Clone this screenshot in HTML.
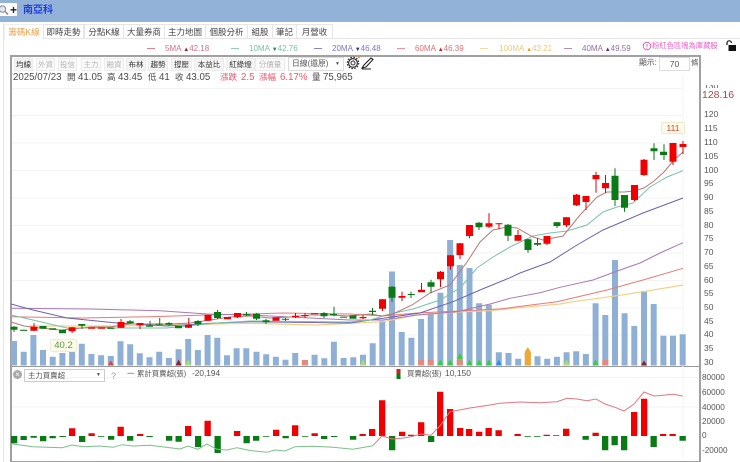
<!DOCTYPE html>
<html><head><meta charset="utf-8"><style>
html,body{margin:0;padding:0;background:#fff}
#p{position:relative;width:740px;height:462px;overflow:hidden;background:#fff;font-family:"Liberation Sans","Noto Sans CJK TC",sans-serif;color:#444;filter:blur(.3px)}
#p div,#p span{position:absolute;white-space:nowrap}
.tab{top:24px;height:14px;line-height:14px;font-size:8.5px;text-align:center;border:1px solid #e6e6e6;border-bottom:none;color:#444;box-sizing:content-box}
.btn{top:58px;height:11px;line-height:11px;font-size:7.5px;text-align:center;background:#f4f4f4;border:1px solid #ececec;color:#333}
.g{color:#b5b5b5;background:#fafafa}
.l{top:43px;font-size:8px;line-height:11px}
.l b{font-weight:normal;font-size:6px}
.d{top:48px;width:8px;height:1px}
.t{top:71px;font-size:9.7px;line-height:13px;color:#4a4a4a}
.c{font-size:8.5px}
.r{color:#f0546a}
.y{left:704px;font-size:8.5px;line-height:11px;color:#555}
.z{left:702px;font-size:8.2px;line-height:11px;color:#555}
</style></head><body><div id="p">
<div style="left:0;top:0;width:740px;height:22px;background:#93b2d8"></div>
<div style="left:0;top:3px;width:17px;height:13px;background:#fff"></div>
<svg style="position:absolute;left:0;top:4px" width="10" height="12"><circle cx="2.5" cy="5" r="3.2" fill="#dfe8f0" stroke="#8a96a0" stroke-width="1.2"/><path d="M5 7.5l3 3" stroke="#a09070" stroke-width="1.6"/></svg>
<div style="left:10px;top:3px;font-size:12px;font-weight:bold;line-height:14px;color:#222">+</div>
<div style="left:23px;top:3px;font-size:10px;line-height:15px;font-weight:bold;color:#1f3fe0">南亞科</div>
<div style="left:3px;top:23px;width:1px;height:439px;background:#e4e4e4"></div>
<div style="left:43px;top:38px;width:697px;height:1px;background:#e6e6e6"></div>
<div class="tab" style="left:4px;width:38px;color:#f0a040;border-color:#eee">籌碼K線</div>
<div class="tab" style="left:43px;width:39px">即時走勢</div>
<div class="tab" style="left:84px;width:38px">分點K線</div>
<div class="tab" style="left:123px;width:40px">大量券商</div>
<div class="tab" style="left:164px;width:40px">主力地圖</div>
<div class="tab" style="left:205px;width:41px">個股分析</div>
<div class="tab" style="left:247px;width:24px">組股</div>
<div class="tab" style="left:272px;width:23px">筆記</div>
<div class="tab" style="left:296px;width:35px">月營收</div>

<div class="d" style="left:147px;background:#e08090"></div><div class="l" style="left:165px;color:#d0708a">5MA <b style="color:#a02020">▲</b>42.18</div>
<div class="d" style="left:231px;background:#90ccb8"></div><div class="l" style="left:249px;color:#7cc0a8">10MA <b style="color:#308060">▼</b>42.76</div>
<div class="d" style="left:314px;background:#8a86c8"></div><div class="l" style="left:332px;color:#7a76c0">20MA <b style="color:#303090">▼</b>46.48</div>
<div class="d" style="left:397px;background:#ee90a0"></div><div class="l" style="left:415px;color:#e07070">60MA <b style="color:#d02020">▲</b>46.39</div>
<div class="d" style="left:480px;background:#f5dc9a"></div><div class="l" style="left:499px;color:#f0c878">100MA <b style="color:#e0a020">▲</b>43.21</div>
<div class="d" style="left:564px;background:#b890b8"></div><div class="l" style="left:582px;color:#9070a0">40MA <b style="color:#702090">▲</b>49.59</div>
<svg style="position:absolute;left:642px;top:41px" width="10" height="10"><circle cx="5" cy="5" r="3.8" fill="none" stroke="#e060c0"/><path d="M5 3v2.6M5 6.6v1" stroke="#e060c0"/></svg>
<div style="left:652px;top:41px;font-size:7.3px;line-height:10px;color:#e860c8">粉紅色區塊為庫藏股</div>
<svg style="position:absolute;left:725px;top:40px" width="12" height="12"><path d="M2 5V3a2.2 2.2 0 0 1 4.4 0" fill="none" stroke="#111" stroke-width="1.2"/><rect x="3.5" y="5" width="7.5" height="6" fill="#111"/></svg>

<div style="left:10px;top:55px;width:687px;height:404px;border:2px solid #a0a0a0"></div>
<div style="left:12px;top:366px;width:687px;height:1px;background:#999"></div>

<div class="btn" style="left:14px;width:17px">均線</div>
<div class="btn g" style="left:36px;width:17px">外資</div>
<div class="btn g" style="left:58px;width:17px">投信</div>
<div class="btn g" style="left:81px;width:18px">主力</div>
<div class="btn g" style="left:104px;width:18px">融資</div>
<div class="btn" style="left:126px;width:18px">布林</div>
<div class="btn" style="left:148px;width:18px">趨勢</div>
<div class="btn" style="left:171px;width:19px">撐壓</div>
<div class="btn" style="left:194px;width:28px">本益比</div>
<div class="btn" style="left:226px;width:27px">紅綠燈</div>
<div class="btn g" style="left:255px;width:28px">分價量</div>
<div style="left:288px;top:57px;width:54px;height:12px;border:1px solid #ddd;font-size:7.8px;line-height:12px;color:#555;text-indent:3px;box-sizing:content-box">日線(還原)<span style="right:3px;top:0;font-size:5px">▼</span></div>
<svg style="position:absolute;left:345px;top:55px" width="30" height="15"><circle cx="8" cy="8" r="2" fill="none" stroke="#333"/><circle cx="8" cy="8" r="4.4" fill="none" stroke="#333" stroke-width="1.2"/><circle cx="8" cy="8" r="5.7" fill="none" stroke="#333" stroke-width="1.2" stroke-dasharray="1.6 1.4"/><circle cx="14" cy="2" r="1.2" fill="#f09030"/><path d="M17 13l2-3 7-7 2 1.5-7 7.5zM17 14h9" fill="none" stroke="#222" stroke-width="1.1"/></svg>

<div style="left:639px;top:57px;font-size:7.8px;line-height:12px;color:#555">顯示:</div>
<div style="left:659px;top:57px;width:29px;height:12px;border:1px solid #ddd;font-size:8.5px;line-height:12px;text-align:center;color:#555">70</div>
<div style="left:691px;top:57px;font-size:7.5px;line-height:12px;color:#555">條</div>

<div class="t" style="left:13px">2025/07/23</div><div class="t c" style="left:67px">開</div><div class="t" style="left:78px">41.05</div>
<div class="t c" style="left:107px">高</div><div class="t" style="left:118px">43.45</div>
<div class="t c" style="left:148px">低</div><div class="t" style="left:159px">41</div>
<div class="t c" style="left:175px">收</div><div class="t" style="left:186px">43.05</div>
<div class="t r c" style="left:220px">漲跌</div><div class="t r" style="left:241px">2.5</div>
<div class="t r c" style="left:259px">漲幅</div><div class="t r" style="left:280px">6.17%</div>
<div class="t c" style="left:312px">量</div><div class="t" style="left:323px">75,965</div>

<svg style="position:absolute;left:0;top:0" width="740" height="462">
<g stroke="#f3f3f3" fill="none"><path d="M12 88.5H682M12 115.5H682M12 143H682M12 170.5H682M12 198H682M12 225.5H682M12 253H682M12 280.5H682M12 308H682M12 335H682M12 377.5H698M12 407H698M683 75V459"/></g>
<path fill="#8fb0d4" d="M11 341h6V365.5h-6zM20.7 351.7h6V365.5h-6zM30.4 335h6V365.5h-6zM40 350h6V365.5h-6zM49.7 356.7h6V365.5h-6zM59.4 353h6V365.5h-6zM69.1 350h6V365.5h-6zM78.8 343.7h6V365.5h-6zM88.4 354h6V365.5h-6zM98.1 355.3h6V365.5h-6zM107.8 356h6V365.5h-6zM117.5 341.3h6V365.5h-6zM127.2 344.3h6V365.5h-6zM136.8 353.3h6V365.5h-6zM146.5 357.3h6V365.5h-6zM156.2 351.7h6V365.5h-6zM165.9 358h6V365.5h-6zM175.6 349.3h6V365.5h-6zM185.2 339h6V365.5h-6zM194.9 350h6V365.5h-6zM204.6 335h6V365.5h-6zM214.3 337.7h6V365.5h-6zM224 355.3h6V365.5h-6zM233.6 348.3h6V365.5h-6zM243.3 348.3h6V365.5h-6zM253.5 351.7h6V365.5h-6zM263.2 354.3h6V365.5h-6zM272.9 356.7h6V365.5h-6zM282.5 359.7h6V365.5h-6zM292.2 353h6V365.5h-6zM301.9 360h6V365.5h-6zM311.6 354.7h6V365.5h-6zM321.3 358.3h6V365.5h-6zM330.9 341.7h6V365.5h-6zM340.6 358h6V365.5h-6zM350.3 357.3h6V365.5h-6zM360 354.7h6V365.5h-6zM369.7 343.3h6V365.5h-6zM379.3 320.7h6V365.5h-6zM389 271.5h6V365.5h-6zM398.7 332h6V365.5h-6zM408.4 337.7h6V365.5h-6zM418.1 319h6V365.5h-6zM427.7 313.3h6V365.5h-6zM437.4 292.7h6V365.5h-6zM447.1 240h6V365.5h-6zM456.8 265h6V365.5h-6zM466.5 268h6V365.5h-6zM476.1 303.3h6V365.5h-6zM485.8 304.7h6V365.5h-6zM495.8 352.3h6V365.5h-6zM505.5 353h6V365.5h-6zM515.2 358.7h6V365.5h-6zM524.8 351.7h6V365.5h-6zM534.5 356.3h6V365.5h-6zM544.2 358.7h6V365.5h-6zM553.9 356.7h6V365.5h-6zM563.6 352.3h6V365.5h-6zM573.2 351.3h6V365.5h-6zM582.9 354h6V365.5h-6zM592.6 303.3h6V365.5h-6zM602.3 315h6V365.5h-6zM612 260h6V365.5h-6zM621.6 313.3h6V365.5h-6zM631.3 326h6V365.5h-6zM641 291h6V365.5h-6zM650.7 304h6V365.5h-6zM660.4 335.7h6V365.5h-6zM670 335.7h6V365.5h-6zM679.7 334.3h6V365.5h-6z"/>
<g>
<path fill="#e04040" d="M107.8 365.5l3-5 3 5z"/><path fill="#902030" d="M175.6 365.5l3-6 3 6z"/><path fill="#a8e070" d="M185.2 365.5l3-6 3 6z"/><path fill="#a8e070" d="M360 365.5l3-6 3 6z"/>
<path fill="#e08a80" d="M301.9 360h6v5.5h-6zM418.1 360h6v5.5h-6zM427.7 360h6v5.5h-6zM456.8 360h6v5.5h-6zM602.3 360h6v5.5h-6z"/>
<path fill="#30d040" d="M437.4 365.5l3-6 3 6zM447.1 365.5l3-6 3 6zM456.8 359l3-6 3 6zM466.5 365.5l3-6 3 6zM476.1 365.5l3-6 3 6zM485.8 365.5l3-6 3 6zM592.6 365.5l3-6 3 6z"/>
<path fill="#3090f0" d="M495.8 365.5l3-6 3 6z"/>
<path fill="#f0a830" d="M524.8 352l3-5 3 5zM524.8 352h6v13.5h-6z"/>
<path fill="#a8e070" d="M563.6 365.5l3-6 3 6z"/><path fill="#802030" d="M641 365.5l3-5 3 5z"/>
</g>
<g fill="none" stroke-width="1">
<path stroke="#f5cf85" stroke-width="1.2" d="M30 326L120 326 250 323.3 317 325 383 321.7 417 315 457 312 490 310.7 523 307.3 560 304 573 301.7 610 296.7 643 291.7 683 285"/>
<path stroke="#e87878" d="M11 316.7L83 318 150 316.7 207 315 250 314 283 313 350 314 383 316 417 313 500 309 523 306 557 301.7 607 290 643 280 683 268.3"/>
<path stroke="#a878b8" d="M11 308.3L90 309 160 310.7 207 314 250 315 350 320 383 320 417 315 457 311.7 490 304 510 298.3 540 292.7 560 287.3 593 280 620 270 640 263 660 253 683 242.7"/>
<path stroke="#6a64b0" d="M11 304L33 310 67 318 117 323 167 326 217 323 250 321.7 350 323 420 313 453 301.7 480 290 510 277.7 520 273 550 262 577 245 603 230 643 213 683 198"/>
<path stroke="#7cc0a8" d="M11 315L33 320 67 328 117 328 167 328 217 323 250 321 350 322 370 320 390 314 413 309 440 300 460 288 477 268 493 257 510 247 533 236 550 233 567 231 587 225 603 212 617 207 633 203 650 187 667 177 683 170.7"/>
<path stroke="#b87878" d="M11 322L24 326 40 328 60 330 72 329 92 327 110 327 130 324 150 324 170 324 190 323 210 320 230 317 250 316 270 318 290 317 310 315 330 315 350 316 370 314 382 316 393 314 412 305 430 293 450 285 467 262 480 242 493 230 507 227 517 228 533 237 543 240 563 236 580 215 597 197 607 192 624 192 634 191 644 188 654 181 664 172 673 161 683 152"/>
</g>
<path stroke="#e00000" fill="none" d="M34 323.3V331M72.100 327V333M121 319V328M140 323V329M188.800 318V328M208 315V321M237.500 313V318M295.500 313V318M305 313V318M363 315V319M382.500 299V311M402 291.700V301M421.500 283V292M440.500 271V287M450.500 255V269.700M460 243V259M469.500 225V238.300M489 213.300V228M499 223V229.300M518 230V241M547 236V245M566.500 217V227M576.500 194V206M586 196V210M596 171.700V192.700M605.500 175V192.700M634.500 185V201M644 159V176M673 143V165M683 141V154"/>
<path stroke="#0a7a14" fill="none" d="M14 326V332M82 324V329M130 320V324M150 321V326M159.700 318V325M169 322V326M198 320V326M217.500 310V319M246.500 312V316M256.500 313V320M266 319V324M285.500 318V321M324 312V318M334 306.700V316M372.500 308V315M392 286V302M411 291.700V298M431 279.700V293.300M479 222V230M508 224V241M528 239V252.700M537.500 238V246M557 222V228M615 168.300V206M624.500 195V211.700M654 143.300V160M664 144.300V160"/>
<path fill="#f00000" d="M30.400 326.700h7V330.700h-7zM68.600 327.300h7V331.300h-7zM88 327.500h7V328.700h-7zM98 327.500h7V328.700h-7zM117.500 322h7V327.700h-7zM136.500 323h7V325.300h-7zM185 325h7V327.700h-7zM204.500 315h7V320.700h-7zM224 317h7V319.300h-7zM234 313h7V317.300h-7zM272.500 317.300h7V320.700h-7zM292 315.700h7V317h-7zM301.500 315h7V316.300h-7zM311 313.300h7V314.300h-7zM359.500 317h7V318.300h-7zM379 299.300h7V308.700h-7zM398.500 296h7V297.700h-7zM418 289.700h7V292.300h-7zM437 271.700h7V279.300h-7zM447 255.300h7V266.300h-7zM456.500 243.300h7V255h-7zM466 225h7V236h-7zM485.500 223.300h7V226.700h-7zM495.500 223.300h7V224.300h-7zM514.500 235h7V240.700h-7zM543.500 236h7V243.700h-7zM563 217.300h7V225.300h-7zM573 194.700h7V205.300h-7zM582.500 196h7V202h-7zM592.500 175h7V179.300h-7zM602 183h7V188.300h-7zM631 185h7V200h-7zM640.500 159.700h7V175h-7zM669.500 143h7V161.700h-7zM679.500 144h7V147h-7z"/>
<path fill="#0a7a14" d="M10.500 326.700h7V329.700h-7zM20.200 329.700h7V330.900h-7zM39.500 326h7V328.700h-7zM49.200 328.300h7V329.700h-7zM59 330h7V333.300h-7zM78.300 324h7V325.700h-7zM107.300 327.500h7V328.900h-7zM126.700 321.300h7V323.300h-7zM146 325.500h7V326.700h-7zM155.700 323.500h7V324.700h-7zM165.400 323h7V324.700h-7zM175 326h7V328.300h-7zM194.400 321h7V324.300h-7zM214 312h7V318h-7zM243 314h7V315.200h-7zM253 313.700h7V318.700h-7zM262.500 320.300h7V322.300h-7zM282 318.700h7V319.700h-7zM320.500 313h7V316.300h-7zM330 314h7V315.300h-7zM340 316.700h7V317.700h-7zM349.500 315.300h7V318.700h-7zM369 310.700h7V312h-7zM388.500 286.700h7V297.700h-7zM407.800 294h7V295h-7zM427.500 282.300h7V286.700h-7zM475.500 222.700h7V227.300h-7zM504.500 224.700h7V235.700h-7zM524.500 239.300h7V250h-7zM534 243h7V244.700h-7zM553.500 222.300h7V226h-7zM611.500 175.700h7V200h-7zM621 195h7V207.700h-7zM650.500 148.300h7V151.300h-7zM660 151.700h7V155h-7z"/>
<path fill="#f00000" d="M69 428.300h6.300V436H69zM88.500 433.300h6.300V436H88.500zM117.500 426.700h6.300V436H117.500zM137 434h6.300V436H137zM185 426h6.300V436H185zM204.500 420.700h6.300V436H204.500zM234 431h6.300V436H234zM273 429.700h6.300V436H273zM292 425.300h6.300V436H292zM311.500 433.300h6.300V436H311.500zM359.500 434h6.300V436H359.500zM369 429h6.300V436H369zM379 400.300h6.300V436H379zM399 431.700h6.300V436H399zM408 434.700h6.300V436H408zM418 422.300h6.300V436H418zM437 391.700h6.300V436H437zM447 409h6.300V436H447zM457 428h6.300V436H457zM466 429h6.300V436H466zM476 431.700h6.300V436H476zM485.500 428h6.300V436H485.500zM495.500 430.300h6.300V436H495.500zM514.500 434h6.300V436H514.500zM543.500 434.700h6.300V436H543.500zM553 435.300h6.300V436H553zM563 428.700h6.300V436H563zM592.500 432.700h6.300V436H592.500zM631 412h6.300V436H631zM641 398.700h6.300V436H641zM660 434h6.300V436H660zM669.500 434h6.300V436H669.500z"/>
<path fill="#0a7a14" d="M11 436h6.300V443.300H11zM20.500 436h6.300V440H20.500zM30.500 436h6.300V437.700H30.500zM40 436h6.300V441.300H40zM49.500 436h6.300V438.300H49.500zM59.500 436h6.300V437H59.500zM79 436h6.300V442H79zM98 436h6.300V436.700H98zM108 436h6.300V439.700H108zM127 436h6.300V440.700H127zM146.500 436h6.300V437H146.500zM166 436h6.300V440.700H166zM175.500 436h6.300V441.700H175.500zM195 436h6.300V447H195zM214.500 436h6.300V453H214.500zM243.500 436h6.300V443.300H243.500zM253 436h6.300V440.700H253zM263 436h6.300V436.700H263zM282.500 436h6.300V438.300H282.500zM302 436h6.300V436.700H302zM321 436h6.300V439H321zM331 436h6.300V437H331zM350 436h6.300V439.700H350zM389 436h6.300V450.300H389zM428 436h6.300V442H428zM524.500 436h6.300V436.700H524.500zM534 436h6.300V436.700H534zM582.500 436h6.300V439.700H582.500zM602 436h6.300V450.300H602zM611.500 436h6.300V445.300H611.500zM621 436h6.300V450.300H621zM650.500 436h6.300V447H650.500zM679.500 436h6.300V440.700H679.500z"/>
<path fill="none" stroke="#78c088" stroke-width="1" d="M11 443.700L33 446.700 62 447.700 72 445 83 446.700 100 446 113 447.300 122 444.700 133 446 150 445.300 180 449 188 446 198 449.300 207 444 217 449.300 227 450 237 447.700 250 450.500 267 452.300 275 450 285 451 295 446.700 313 446.300 333 447.300 353 449.300 372.700 445.700"/>
<path fill="none" stroke="#e07880" stroke-width="1" d="M372.700 445.700L382 436 392 439 402 438.300 411 436.700 421 434 431 435.300 440.700 425 450 411.700 470 408 490 405 500 403.300 520 402 540 402.700 557 401.700 567 398.300 577 399 587 400.700 596 399 605 404 615 407.300 624 411 634 404 644 392 654 396 663 395.300 673 394.300 682.700 396"/>
<path d="M396.500 369h4v5h-4z" fill="#d02020"/><path d="M396.500 374h4v5h-4z" fill="#0a7a14"/>
</svg>

<div style="left:50px;top:339px;width:25px;height:11px;background:#fbfbe8;border:1px solid #eeeed8;border-radius:2px;font-size:9.5px;line-height:11px;text-align:center;color:#5a9a50">40.2</div>
<div style="left:661px;top:122px;width:22px;height:10px;background:#fdfbe8;border:1px solid #eeead0;border-radius:2px;font-size:8.5px;line-height:10px;text-align:center;color:#d84030">111</div>

<div class="y" style="top:81px">130</div><div class="y" style="top:95px">125</div>
<div style="left:702px;top:72px;width:36px;height:13px;background:#fff"></div>
<div style="left:702px;top:88px;width:36px;height:15px;background:#fff"></div>
<div style="left:702px;top:89px;font-size:10.5px;line-height:13px;color:#a04848">128.16</div>
<div class="y" style="top:109px">120</div><div class="y" style="top:123px">115</div><div class="y" style="top:137px">110</div><div class="y" style="top:151px">105</div><div class="y" style="top:165px">100</div><div class="y" style="top:178px">95</div><div class="y" style="top:192px">90</div><div class="y" style="top:206px">85</div><div class="y" style="top:220px">80</div><div class="y" style="top:233px">75</div><div class="y" style="top:247px">70</div><div class="y" style="top:261px">65</div><div class="y" style="top:275px">60</div><div class="y" style="top:288px">55</div><div class="y" style="top:302px">50</div><div class="y" style="top:316px">45</div><div class="y" style="top:329px">40</div><div class="y" style="top:343px">35</div><div class="y" style="top:357px">30</div>
<div class="z" style="top:372px">80000</div><div class="z" style="top:387px">60000</div><div class="z" style="top:402px">40000</div><div class="z" style="top:416px">20000</div><div class="z" style="top:430px">0</div><div class="z" style="top:445px">-20000</div>

<div style="left:13px;top:370px;width:9px;height:9px;border-radius:50%;background:#a8a8a8;color:#fff;font-size:8px;line-height:9px;text-align:center">×</div>
<div style="left:24px;top:369px;width:79px;height:11px;border:1px solid #ccc;font-size:7.4px;line-height:11px;color:#555;text-indent:3px">主力買賣超<span style="right:3px;top:0;font-size:5px">▼</span></div>
<div style="left:111px;top:370px;font-size:9px;line-height:12px;color:#999">?</div>
<div style="left:127px;top:367px;font-size:7.5px;line-height:13px;color:#555">一</div>
<div style="left:137px;top:367px;font-size:7.4px;line-height:13px;color:#555">累計買賣超(張)</div>
<div style="left:192px;top:367px;font-size:8.3px;line-height:13px;color:#555">-20,194</div>
<div style="left:407px;top:367px;font-size:7.4px;line-height:13px;color:#555">買賣超(張)</div>
<div style="left:445px;top:367px;font-size:8.5px;line-height:13px;color:#555">10,150</div>
</div></body></html>
